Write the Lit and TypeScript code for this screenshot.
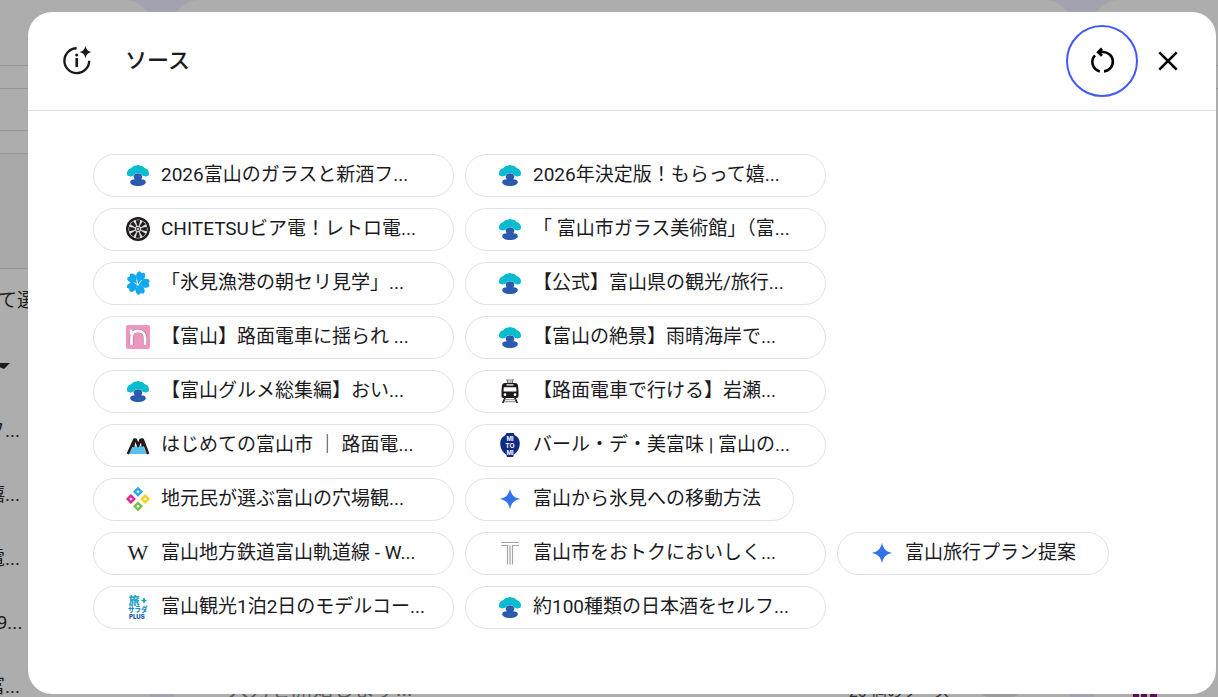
import { LitElement, html, css, svg, TemplateResult } from "lit";
import { customElement, property } from "lit/decorators.js";

const icons: Record<string, TemplateResult> = {
  tree: svg`
    <path fill="#06bdd0" d="M1.300 12.300C.3 9 2 5.700 5.500 5 6.500 3 8.700 2.500 9.700 2.700 11 1.600 13 1.600 14.300 2.700c1-.2 3.200.3 4.200 2.300 3.500.7 5.200 4 4.200 7.300-1.500 1.500-5 1.500-6.700 0C15 10.600 14 10 12 10s-3 .6-4 2.300c-1.700 1.500-5.200 1.500-6.700 0Z"/>
    <path fill="#2a5bb0" d="M12 10.300c2.700 0 4.300 1.700 4.300 3.500 0 1.100-.6 1.900-1.100 2.400 2.900 0 4.600 1 4.600 2.700 0 2.500-3.500 4-7.800 4s-7.800-1.500-7.800-4c0-1.700 1.700-2.700 4.600-2.700-.5-.5-1.100-1.300-1.100-2.400 0-1.800 1.600-3.500 4.300-3.500Z"/>`,
  wheel: svg`
    <circle cx="12" cy="12" r="12" fill="#1f1d1d"/>
    <circle cx="12" cy="12" r="9.600" fill="#e4e2e0"/>
    ${[0, 45, 90, 135, 180, 225, 270, 315].map(
      (a) => svg`<path transform="rotate(${a} 12 12)" fill="#1f1d1d" d="M9.800 3.200h4.400L12.900 8.800h-1.800Z"/>`
    )}
    <circle cx="12" cy="12" r="2.200" fill="#4a4846"/>
    <circle cx="12" cy="12" r="1" fill="#f0eeec"/>`,
  flower: svg`
    ${[20, 92, 164, 236, 308].map(
      (a) => svg`<path transform="rotate(${a} 12 12)" fill="#12a8ee" d="M12 13.500 9.500 8.500 7.800 6.500C7 3.500 7.600 1 9.800.3L12 1.500 14.200.3c2.200.7 2.800 3.200 2 6.200l-1.700 2Z"/>`
    )}
    <path d="M12 14 10.700 9M12 14l-3.200-2M12 14l3.200-4.500" stroke="#e6f7ff" stroke-width="1" fill="none" stroke-linecap="round"/>`,
  arch: svg`
    <rect width="24" height="24" rx="2" fill="#ee96c0"/>
    <path d="M5.500 20V12.500C5.500 8.500 8 6 12 6s7 2.500 7 6.500V20M5 4.500v5" fill="none" stroke="#a0808f" stroke-width="4"/>
    <path d="M5.500 20V12.500C5.500 8.500 8 6 12 6s7 2.500 7 6.500V20M5 4.500v5" fill="none" stroke="#fff" stroke-width="2.800"/>`,
  tram: svg`
    <path d="M8 1h8M9 3h6M9.500 1v3M14.500 1v3" stroke="#777" stroke-width="1"/>
    <path fill="#1c1918" fill-rule="evenodd" d="M7 4h10c1.800 0 2.800 1 3.100 3l.4 5v5c0 1.200-.7 2-1.900 2H5.400c-1.200 0-1.900-.8-1.900-2v-5l.4-5C4.200 5 5.200 4 7 4Zm1.500 1.300v1.200h7V5.300ZM5.800 8.200 5.500 12.500h13l-.3-4.300ZM7 14.300a1.400 1.400 0 1 0 0 2.800 1.400 1.400 0 0 0 0-2.800Zm10 0a1.400 1.400 0 1 0 0 2.800 1.400 1.400 0 0 0 0-2.800Z"/>
    <path d="m7 19-2.200 5M17 19l2.200 5" stroke="#1c1918" stroke-width="1.800"/>
    <path d="M6.400 20.700h11.200M5.600 22.700h12.800" stroke="#8a8888" stroke-width="1"/>`,
  mountain: svg`
    <path fill="#56c1f0" d="M3 21 7.500 12l4.500 2 4.500-2L21 21Z"/>
    <path fill="none" stroke="#241b19" stroke-width="2.500" stroke-linejoin="round" d="M1.800 21 8.300 6.500l1.700.3L12.200 13l2.300-6.300 2.200-.2L22.200 21M8.500 7.500 7 14M16 7.500l.8 6"/>`,
  barrel: svg`
    <path fill="#102b82" d="M8.500 0h7l1 2c3.300 1.500 5.300 4.500 5.300 8.500 0 5-2.800 9-6 11.200L15 24H9l-.8-2.300c-3.200-2.200-6-6.200-6-11.200 0-4 2-7 5.300-8.500Z"/>
    <g fill="#fff" font-family="Liberation Sans, sans-serif" font-weight="700" font-size="6.500" text-anchor="middle">
      <text x="12" y="7.500">MI</text><text x="12" y="14.500">TO</text><text x="12" y="21.500">MI</text>
    </g>`,
  diamonds: svg`
    <g fill="none" stroke-width="2.400">
      <path stroke="#28a9e8" d="m12 1.400 3.300 3.300L12 8 8.700 4.700Z"/>
      <path stroke="#ea1b94" d="M4.900 8.700 8.200 12l-3.300 3.300L1.600 12Z"/>
      <path stroke="#fad01c" d="m19.100 8.700 3.300 3.300-3.300 3.300-3.300-3.300Z"/>
      <path stroke="#7bc143" d="m12 16 3.300 3.300-3.300 3.300-3.300-3.300Z"/>
    </g>`,
  spark: svg`<path fill="#3273ea" d="M12 1.800C13.400 8 15.900 10.600 22.200 12 15.900 13.400 13.400 16 12 22.200 10.600 16 8.100 13.400 1.800 12 8.100 10.600 10.600 8 12 1.800Z"/>`,
  wiki: svg`<text x="12" y="19" text-anchor="middle" font-family="Liberation Serif, serif" font-size="22" fill="#1b1b1b">W</text>`,
  tee: svg`
    <path d="M3 1.500h18M3 4.500h6.500v19M21 4.500h-6.500v19M12 4.500v19" fill="none" stroke="#a5a5a5" stroke-width="1.200"/>`,
  salad: svg`
    <path d="M15.500 5.500h5M18 3v5" stroke="#17a398" stroke-width="1.600"/>
    <g font-family="Noto Sans CJK JP, sans-serif" font-weight="900">
      <text x="2.500" y="10" font-size="11" fill="#1b9fc4">旅</text>
      <text x="2" y="17.200" font-size="6.500" fill="#1a8fbe">サラダ</text>
      <text x="3" y="23.600" font-size="6" fill="#1c5da8" font-family="Inter, sans-serif">PLUS</text>
    </g>`,
};

interface Source {
  icon: string;
  label: string;
}

const sources: Source[] = [
  { icon: "tree", label: "2026富山のガラスと新酒フ..." },
  { icon: "tree", label: "2026年決定版！もらって嬉..." },
  { icon: "wheel", label: "CHITETSUビア電！レトロ電..." },
  { icon: "tree", label: "「 富山市ガラス美術館」（富..." },
  { icon: "flower", label: "「氷見漁港の朝セリ見学」..." },
  { icon: "tree", label: "【公式】富山県の観光/旅行..." },
  { icon: "arch", label: "【富山】路面電車に揺られ ..." },
  { icon: "tree", label: "【富山の絶景】雨晴海岸で..." },
  { icon: "tree", label: "【富山グルメ総集編】おい..." },
  { icon: "tram", label: "【路面電車で行ける】岩瀬..." },
  { icon: "mountain", label: "はじめての富山市 ｜ 路面電..." },
  { icon: "barrel", label: "バール・デ・美富味 | 富山の..." },
  { icon: "diamonds", label: "地元民が選ぶ富山の穴場観..." },
  { icon: "spark", label: "富山から氷見への移動方法" },
  { icon: "wiki", label: "富山地方鉄道富山軌道線 - W..." },
  { icon: "tee", label: "富山市をおトクにおいしく..." },
  { icon: "spark", label: "富山旅行プラン提案" },
  { icon: "salad", label: "富山観光1泊2日のモデルコー..." },
  { icon: "tree", label: "約100種類の日本酒をセルフ..." },
];

@customElement("source-chip")
export class SourceChip extends LitElement {
  @property() icon = "";
  @property() label = "";

  static styles = css`
    :host {
      display: block;
    }
    .chip {
      display: flex;
      align-items: center;
      gap: 11px;
      height: 43px;
      padding: 0 32px 1px;
      box-sizing: border-box;
      border: 1px solid #dde1eb;
      border-radius: 22px;
      background: #fff;
      color: #1b1b1f;
      font: 400 19px/27px Roboto, "Noto Sans CJK JP", sans-serif;
      white-space: nowrap;
      cursor: pointer;
    }
    .cut {
      width: 361px;
    }
    .icon {
      width: 24px;
      height: 24px;
      flex: none;
    }
    .label {
      padding-bottom: 1px;
    }
  `;

  render() {
    const cut = this.label.endsWith("...");
    return html`<button class="chip ${cut ? "cut" : ""}">
      <svg class="icon" viewBox="0 0 24 24" aria-hidden="true">${icons[this.icon]}</svg>
      <span class="label">${this.label}</span>
    </button>`;
  }
}

@customElement("notebook-backdrop")
export class NotebookBackdrop extends LitElement {
  static styles = css`
    :host {
      display: grid;
      grid-template-columns: 150px 1fr 124px;
      gap: 24px;
      height: 100%;
      background: #a3a3af;
      color: #1e1e20;
      font: 400 19px/24px Roboto, "Noto Sans CJK JP", sans-serif;
      white-space: nowrap;
      overflow: hidden;
    }
    .panel {
      background: #adadad;
      border-radius: 24px 24px 0 0;
      overflow: hidden;
      display: flex;
      flex-direction: column;
    }
    .first {
      border-top-left-radius: 0;
    }
    .last {
      border-top-right-radius: 0;
    }
    .band {
      box-sizing: border-box;
      border-bottom: 1px solid #9696a2;
      flex: none;
    }
    .top {
      height: 66px;
    }
    .thin {
      height: 23px;
    }
    .mid {
      height: 42px;
    }
    .box {
      height: 115px;
      background: #a8a8a8;
    }
    .lead {
      padding: 20px 0 0;
      margin-left: -2px;
    }
    .arrow {
      flex: none;
      width: 10px;
      height: 6px;
      margin: 50px 0 0;
      background: #1e1e20;
      clip-path: polygon(0 0, 100% 0, 40% 100%, 0 70%);
    }
    .list {
      list-style: none;
      margin: 30px 0 0 -14px;
      padding: 0;
    }
    .item {
      height: 64px;
      line-height: 64px;
    }
    .foot {
      display: flex;
      align-items: center;
      height: 16px;
      margin-top: auto;
      padding: 0 44px 0 54px;
      color: #5a5a5c;
    }
    .hint {
      font-size: 21px;
    }
    .count {
      margin: 0 24px 0 auto;
      padding-top: 6px;
      color: #333335;
      font-size: 16px;
    }
    .send {
      width: 52px;
      height: 16px;
      background: #9c9c9e;
      border-radius: 0 0 16px 16px;
    }
    .badge {
      width: 24px;
      height: 6px;
      margin: auto 0 0 39px;
      background: linear-gradient(90deg, #5c1050 6px, #adadad 6px 8px, #5c1050 8px 14px, #adadad 14px 17px, #5c1050 17px);
    }
  `;

  render() {
    return html`
      <div class="panel first">
        <div class="band top"></div>
        <div class="band thin"></div>
        <div class="band mid"></div>
        <div class="band thin"></div>
        <div class="band box"></div>
        <div class="lead">て選択</div>
        <div class="arrow"></div>
        <ul class="list">
          ${["フ...", "嬉...", "電...", "09...", "富..."].map((t) => html`<li class="item">${t}</li>`)}
        </ul>
      </div>
      <div class="panel">
        <div class="foot">
          <span class="hint">入力を開始します...</span><span class="count">20 個のソース</span><span class="send"></span>
        </div>
      </div>
      <div class="panel last">
        <div class="band top"></div>
        <div class="band thin"></div>
        <div class="badge"></div>
      </div>
    `;
  }
}

@customElement("app-root")
export class AppRoot extends LitElement {
  static styles = css`
    :host {
      display: grid;
      grid-template-rows: minmax(0, 1fr);
      height: 100vh;
      overflow: hidden;
    }
    .back,
    .stage {
      grid-area: 1 / 1;
      min-width: 0;
      min-height: 0;
    }
    .stage {
      display: flex;
      padding: 12px 2px 3px 28px;
      z-index: 1;
    }
    .dialog {
      flex: 1;
      min-width: 0;
      background: #fff;
      border-radius: 24px;
      overflow: hidden;
    }
    .header {
      display: flex;
      align-items: center;
      height: 98px;
      padding: 0 28px 0 33px;
      border-bottom: 1px solid #dde1eb;
    }
    .mark {
      width: 32px;
      height: 32px;
      margin-right: 32px;
    }
    .title {
      flex: 1;
      margin: 0;
      color: #1b1b1f;
      font: 500 22px/32px Roboto, "Noto Sans CJK JP", sans-serif;
    }
    .reload,
    .close {
      display: grid;
      place-items: center;
      padding: 0;
      background: none;
      color: #000;
      cursor: pointer;
    }
    .reload {
      width: 72px;
      height: 72px;
      border: 2px solid #4459fb;
      border-radius: 50%;
    }
    .close {
      width: 40px;
      height: 48px;
      margin-left: 10px;
      border: 0;
    }
    .glyph {
      width: 32px;
      height: 32px;
    }
    .chips {
      display: flex;
      flex-wrap: wrap;
      gap: 11px;
      margin: 0;
      padding: 43px 65px;
      list-style: none;
    }
  `;

  render() {
    return html`
      <notebook-backdrop class="back" aria-hidden="true"></notebook-backdrop>
      <div class="stage">
        <section class="dialog" role="dialog" aria-labelledby="title">
          <header class="header">
            <svg class="mark" viewBox="0 0 32 32" aria-hidden="true">
              <path d="M15.700 3.300A12.400 12.400 0 1 0 28.200 15.700" fill="none" stroke="#1b1b1f" stroke-width="2.400" />
              <path d="M15.700 13v9" stroke="#1b1b1f" stroke-width="2.600" />
              <circle cx="15.700" cy="10" r="1.600" fill="#1b1b1f" />
              <path d="M24.500.7c1 4 2.300 5.300 6 6.300-3.700 1-5 2.300-6 6.300-1-4-2.300-5.300-6-6.300 3.700-1 5-2.300 6-6.300Z" fill="#1b1b1f" />
            </svg>
            <h1 class="title" id="title">ソース</h1>
            <button class="reload" aria-label="更新">
              <svg class="glyph" viewBox="0 0 32 32" fill="none" stroke="currentColor" stroke-width="2.600">
                <path d="M13 7H16.200A9.700 9.700 0 0 1 18 26.400M13.800 26.400A9.700 9.700 0 0 1 9 10.300" />
                <path d="m16 3.600-3.600 3.600L16 10.800" stroke-width="3" />
              </svg>
            </button>
            <button class="close" aria-label="閉じる">
              <svg class="glyph" viewBox="0 0 32 32" fill="none" stroke="currentColor" stroke-width="2.600">
                <path d="m7.300 7.300 17.400 17.400M24.700 7.300 7.300 24.700" />
              </svg>
            </button>
          </header>
          <ul class="chips">
            ${sources.map((s) => html`<li><source-chip .icon=${s.icon} .label=${s.label}></source-chip></li>`)}
          </ul>
        </section>
      </div>
    `;
  }
}
